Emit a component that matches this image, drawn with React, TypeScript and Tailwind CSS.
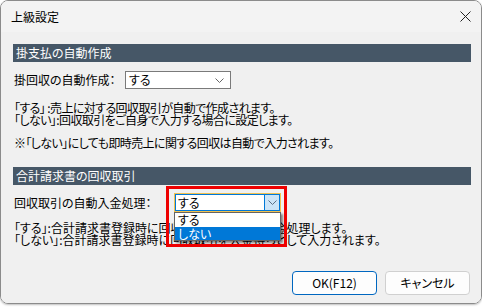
import React from 'react';

const Chevron: React.FC<{ className?: string }> = ({ className }) => (
  <svg width="9" height="5" viewBox="0 0 9 5" className={className}>
    <polyline points="0.5,0.5 4.5,4.5 8.5,0.5" fill="none" stroke="currentColor" strokeWidth="1" />
  </svg>
);

export default function App() {
  return (
    <div className="w-[482px] h-[307px] bg-white font-['Noto_Sans_CJK_JP',sans-serif] text-[12px] leading-[12px] text-black [font-feature-settings:'palt']">
      <div className="w-[482px] h-[304px] flex flex-col border border-[#8b8b8b] rounded-[8px] overflow-hidden shadow-[0_1px_2px_rgba(0,0,0,0.25)]">
        {/* Title bar */}
        <div className="h-[31px] shrink-0 bg-[#f3f3f3] flex items-center justify-between pl-[10px] pr-[10px]">
          <span className="text-[12px]">上級設定</span>
          <svg width="11" height="11" viewBox="0 0 11 11" className="text-[#222]">
            <line x1="0.5" y1="0.5" x2="10.5" y2="10.5" stroke="currentColor" strokeWidth="1" />
            <line x1="10.5" y1="0.5" x2="0.5" y2="10.5" stroke="currentColor" strokeWidth="1" />
          </svg>
        </div>

        {/* Body */}
        <div className="flex-1 bg-[#f0f0f0] pl-[12px] pr-[10px] pt-[12px] flex flex-col">
          {/* Section 1 */}
          <div className="h-[18px] bg-[#465767] text-white flex items-center pl-[3px]">掛支払の自動作成</div>
          <div className="flex items-center mt-[9px] pl-[1px]">
            <span className="w-[111px]">掛回収の自動作成：</span>
            <div className="w-[106px] h-[18px] bg-white border border-[#7a7a7a] flex items-center justify-between pl-[3px] pr-[6px]">
              <span>する</span>
              <Chevron className="text-[#666]" />
            </div>
          </div>
          <div className="mt-[13px] pl-[1px] tracking-[-0.6px]">
            <p>「する」&nbsp;:売上に対する回収取引が自動で作成されます。</p>
            <p>「しない」:回収取引をご自身で入力する場合に設定します。</p>
            <p className="mt-[11px]">※「しない」にしても即時売上に関する回収は自動で入力されます。</p>
          </div>

          {/* Section 2 */}
          <div className="h-[18px] bg-[#465767] text-white flex items-center pl-[3px] mt-[18px]">合計請求書の回収取引</div>
          <div className="flex items-center mt-[8px] pl-[1px]">
            <span className="w-[160px]">回収取引の自動入金処理：</span>
            <div className="relative z-10">
              <div className="w-[107px] h-[19px] bg-white border border-[#f2c14e] flex">
                <div className="flex-1 border border-[#0078d7] border-r-0 flex items-center pl-[2px]">する</div>
                <div className="w-[16px] bg-[#cce4f7] border border-[#0078d7] flex items-center justify-center">
                  <Chevron className="text-[#5a6f86]" />
                </div>
              </div>
              <div className="absolute left-0 top-full w-[107px] bg-white border border-[#646464] shadow-[2px_2px_2px_rgba(0,0,0,0.45)]">
                <div className="h-[14px] flex items-center pl-[3px]">する</div>
                <div className="h-[13px] flex items-center pl-[3px] bg-[#0078d7] text-white">しない</div>
              </div>
              <div className="absolute -left-[8px] -top-[7px] w-[121px] h-[61px] border-[3px] border-[#ee0000]" />
            </div>
          </div>
          <div className="mt-[10px] pl-[1px]">
            <p>「する」:合計請求書登録時に回収取引を作成して入金処理します。</p>
            <p>「しない」:合計請求書登録時に回収取引を入金待ちとして入力されます。</p>
          </div>

          {/* Buttons */}
          <div className="mt-auto mb-[8px] flex justify-end gap-[8px] pr-[1px]">
            <button className="w-[85px] h-[24px] bg-[#fdfdfd] border border-[#0067c0] rounded-[4px] text-[12px]">OK(F12)</button>
            <button className="w-[85px] h-[24px] bg-[#fdfdfd] border border-[#d0d0d0] rounded-[4px] text-[12px]">キャンセル</button>
          </div>
        </div>
      </div>
    </div>
  );
}
